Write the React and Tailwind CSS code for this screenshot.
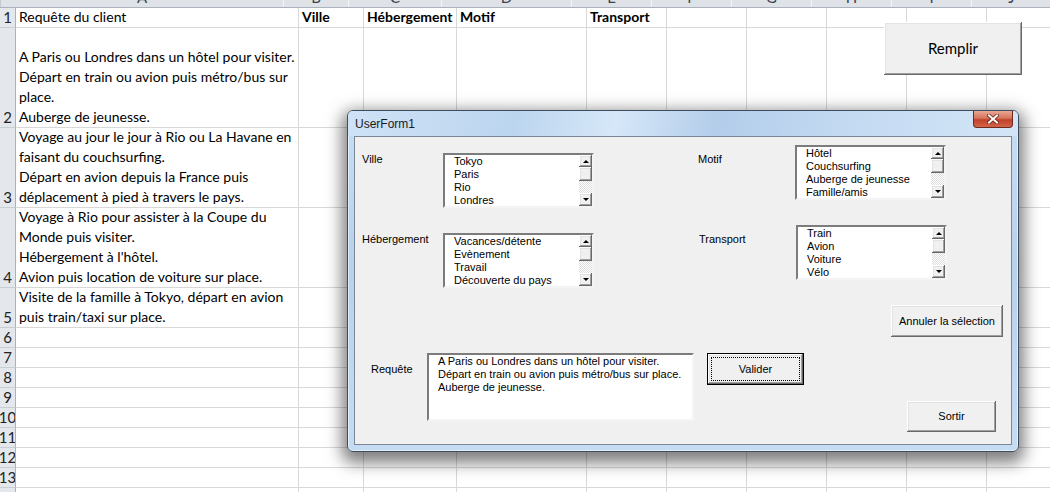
const COLS = [283, 65, 93, 130, 80, 80, 80, 80, 80, 80]
const LETTERS = ['A', 'B', 'C', 'D', 'E', 'F', 'G', 'H', 'I', 'J']

const ROWS = [
  { n: '1', h: 'h-[20px]', a: ['Requête du client'], bold: ['Ville', 'Hébergement', 'Motif', 'Transport'] },
  {
    n: '2',
    h: 'h-[100px]',
    a: ['A Paris ou Londres dans un hôtel pour visiter.', 'Départ en train ou avion puis métro/bus sur', 'place.', 'Auberge de jeunesse.'],
  },
  {
    n: '3',
    h: 'h-[80px]',
    a: ['Voyage au jour le jour à Rio ou La Havane en', 'faisant du couchsurfing.', 'Départ en avion depuis la France puis', 'déplacement à pied à travers le pays.'],
  },
  {
    n: '4',
    h: 'h-[80px]',
    a: ['Voyage à Rio pour assister à la Coupe du', 'Monde puis visiter.', "Hébergement à l'hôtel.", 'Avion puis location de voiture sur place.'],
  },
  { n: '5', h: 'h-[40px]', a: ['Visite de la famille à Tokyo, départ en avion', 'puis train/taxi sur place.'] },
  { n: '6', h: 'h-[20px]', a: [] },
  { n: '7', h: 'h-[20px]', a: [] },
  { n: '8', h: 'h-[20px]', a: [] },
  { n: '9', h: 'h-[20px]', a: [] },
  { n: '10', h: 'h-[20px]', a: [] },
  { n: '11', h: 'h-[20px]', a: [] },
  { n: '12', h: 'h-[20px]', a: [] },
  { n: '13', h: 'h-[20px]', a: [] },
  { n: '14', h: 'h-[20px]', a: [] },
]

const raised =
  'bg-[#f0f0f0] shadow-[inset_-1px_-1px_#696969,inset_1px_1px_#ffffff,inset_-2px_-2px_#a0a0a0,inset_2px_2px_#e3e3e3]'

function Arrow({ up }) {
  return up ? (
    <div className="h-0 w-0 border-x-[3px] border-b-[3px] border-x-transparent border-b-black" />
  ) : (
    <div className="h-0 w-0 border-x-[3px] border-t-[3px] border-x-transparent border-t-black" />
  )
}

function ScrollBar() {
  return (
    <div className="flex w-[13px] flex-col">
      <div className={`flex h-[12px] items-center justify-center ${raised}`}>
        <Arrow up />
      </div>
      <div className={`h-[14px] ${raised}`} />
      <div className="flex-1 bg-[repeating-conic-gradient(#ffffff_0_25%,#dcdcdc_0_50%)] bg-size-[2px_2px]" />
      <div className={`flex h-[13px] items-center justify-center ${raised}`}>
        <Arrow />
      </div>
    </div>
  )
}

function ListBox({ items }) {
  return (
    <div className="flex h-[55px] w-[151px] border-2 border-t-[#7c7c7c] border-l-[#7c7c7c] border-r-[#f4f4f4] border-b-[#f4f4f4] bg-white">
      <div className="flex-1 overflow-hidden pl-[9px] leading-[13px]">
        {items.map(i => (
          <div key={i} className="whitespace-nowrap">{i}</div>
        ))}
      </div>
      <ScrollBar />
    </div>
  )
}

function Sheet() {
  return (
    <div className="font-['Lato',sans-serif] text-[14px] text-black">
      {/* column headers, cut at the top of the picture */}
      <div className="flex h-[8px] border-b border-[#a9b2bd] bg-[#dfe3e8]">
        <div className="w-[16px] border-r border-[#c3cad3]" />
        {COLS.map((w, i) => (
          <div
            key={i}
            style={{ width: w }}
            className="flex shrink-0 justify-center overflow-hidden border-r border-[#f3f5f7] text-[15px] text-[#3b4350]"
          >
            <span className="-mt-[13px] leading-[20px]">{LETTERS[i]}</span>
          </div>
        ))}
      </div>
      {ROWS.map(r => (
        <div key={r.n} className={`flex ${r.h}`}>
          <div className="flex w-[16px] shrink-0 items-end justify-center overflow-hidden border-r border-b border-r-[#a9b2bd] border-b-[#c9ced5] bg-[#e4e7ec] text-[15px] leading-[20px] text-[#222]">
            <span className="whitespace-nowrap">{r.n}</span>
          </div>
          {COLS.map((w, i) => (
            <div
              key={i}
              style={{ width: w }}
              className="flex shrink-0 flex-col justify-end border-r border-b border-[#d8d8d8] pl-[3px] leading-[20px]"
            >
              {i === 0 &&
                r.a.map(line => (
                  <div key={line} className="whitespace-nowrap">{line}</div>
                ))}
              {r.bold && i > 0 && i < 5 && <div className="whitespace-nowrap font-bold">{r.bold[i - 1]}</div>}
            </div>
          ))}
        </div>
      ))}
    </div>
  )
}

function CloseIcon() {
  return (
    <svg width="12" height="10" viewBox="0 0 12 10">
      <path d="M2 1.5 L10 8.5 M10 1.5 L2 8.5" stroke="#6b2416" strokeWidth="3.6" strokeLinecap="square" />
      <path d="M2 1.5 L10 8.5 M10 1.5 L2 8.5" stroke="#ffffff" strokeWidth="2" strokeLinecap="square" />
    </svg>
  )
}

function UserForm() {
  return (
    <div className="absolute left-[347px] top-[110px] flex h-[342px] w-[672px] flex-col rounded-[6px] border border-[#3d4c5e] bg-[linear-gradient(180deg,#c9def4,#b8d1ec_45%,#c6dcf3)] shadow-[inset_0_0_0_1px_rgba(255,255,255,0.55),0_6px_16px_5px_rgba(0,0,0,0.5)]">
      <div className="relative flex h-[25px] items-center rounded-t-[5px] bg-[linear-gradient(100deg,#cfe2f6_0%,#bcd5ef_25%,#d6e7f8_40%,#b3cdea_55%,#c4daf2_75%,#d3e5f7_100%)] pl-[7px] font-['Liberation_Sans',sans-serif] text-[12px] text-[#1a1a1a]">
        UserForm1
        <div className="absolute right-[5px] top-0 flex h-[17px] w-[40px] items-center justify-center rounded-b-[4px] border border-t-0 border-[#6e2a1e] bg-[linear-gradient(180deg,#e9a896_0%,#d6735b_45%,#c2412a_55%,#d2654a_100%)]">
          <CloseIcon />
        </div>
      </div>
      <div className="mx-[6px] mb-[6px] flex-1 border border-[#7b8796] bg-[#f0f0f0] font-['Liberation_Sans',sans-serif] text-[11px] text-black">
        <div className="mt-[8px] flex h-[80px]">
          <div className="ml-[7px] mt-[8px] flex items-start">
            <div className="w-[81px] leading-[13px]">Ville</div>
            <ListBox items={['Tokyo', 'Paris', 'Rio', 'Londres']} />
          </div>
          <div className="ml-[104px] flex items-start">
            <div className="mt-[8px] w-[97px] leading-[13px]">Motif</div>
            <ListBox items={['Hôtel', 'Couchsurfing', 'Auberge de jeunesse', 'Famille/amis']} />
          </div>
        </div>
        <div className="flex h-[80px]">
          <div className="ml-[7px] mt-[8px] flex items-start">
            <div className="w-[81px] leading-[13px]">Hébergement</div>
            <ListBox items={['Vacances/détente', 'Evènement', 'Travail', 'Découverte du pays']} />
          </div>
          <div className="ml-[105px] flex items-start">
            <div className="mt-[8px] w-[97px] leading-[13px]">Transport</div>
            <ListBox items={['Train', 'Avion', 'Voiture', 'Vélo']} />
          </div>
        </div>
        <div className="flex">
          <div className={`ml-[536px] flex h-[32px] w-[112px] items-center justify-center ${raised}`}>
            Annuler la sélection
          </div>
        </div>
        <div className="mt-[16px] flex items-start">
          <div className="ml-[16px] mt-[10px] w-[56px] leading-[13px]">Requête</div>
          <div className="h-[68px] w-[267px] border-2 border-t-[#7c7c7c] border-l-[#7c7c7c] border-r-[#f4f4f4] border-b-[#f4f4f4] bg-white pl-[9px] leading-[13px]">
            <div>A Paris ou Londres dans un hôtel pour visiter.</div>
            <div>Départ en train ou avion puis métro/bus sur place.</div>
            <div>Auberge de jeunesse.</div>
          </div>
          <div className="ml-[13px] flex h-[32px] w-[97px] border border-black">
            <div className={`flex flex-1 p-[3px] ${raised}`}>
              <div className="flex flex-1 items-center justify-center border border-dotted border-black">Valider</div>
            </div>
          </div>
          <div className={`ml-[103px] mt-[48px] flex h-[31px] w-[89px] items-center justify-center ${raised}`}>
            Sortir
          </div>
        </div>
      </div>
    </div>
  )
}

export default function App() {
  return (
    <div className="relative h-[492px] w-[1050px] overflow-hidden bg-white">
      <Sheet />
      <div
        className={`absolute left-[884px] top-[22px] flex h-[53px] w-[138px] items-center justify-center font-['Lato',sans-serif] text-[15px] text-black ${raised}`}
      >
        Remplir
      </div>
      <UserForm />
    </div>
  )
}
